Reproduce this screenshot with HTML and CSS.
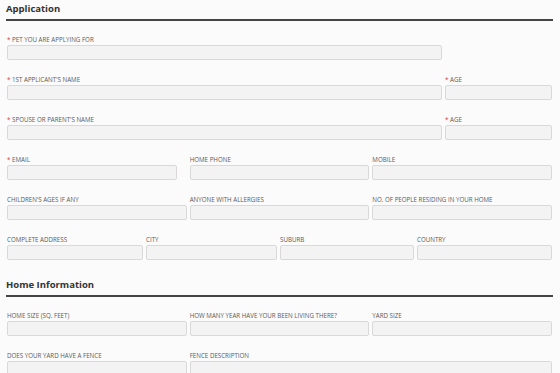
FILE: index.html
```html
<!DOCTYPE html>
<html lang="en">
<head>
    <meta charset="UTF-8">
    <meta name="viewport" content="width=device-width, initial-scale=1.0">
    <title>Adoption Application</title>
    <link rel="stylesheet" href="styles.css">
</head>
<body>
    <form class="application">
        <h2>Application</h2>
        <div class="section">
            <div class="row cols-name">
                <div class="field">
                    <label><span class="req">*</span> Pet you are applying for</label>
                    <input type="text">
                </div>
            </div>
            <div class="row cols-name">
                <div class="field">
                    <label><span class="req">*</span> 1st applicant's name</label>
                    <input type="text">
                </div>
                <div class="field">
                    <label><span class="req">*</span> Age</label>
                    <input type="text">
                </div>
            </div>
            <div class="row cols-name">
                <div class="field">
                    <label><span class="req">*</span> Spouse or parent's name</label>
                    <input type="text">
                </div>
                <div class="field">
                    <label><span class="req">*</span> Age</label>
                    <input type="text">
                </div>
            </div>
            <div class="row cols-3">
                <div class="field">
                    <label><span class="req">*</span> Email</label>
                    <input type="email" class="short">
                </div>
                <div class="field">
                    <label>Home phone</label>
                    <input type="text">
                </div>
                <div class="field">
                    <label>Mobile</label>
                    <input type="text">
                </div>
            </div>
            <div class="row cols-3">
                <div class="field">
                    <label>Children's ages if any</label>
                    <input type="text">
                </div>
                <div class="field">
                    <label>Anyone with allergies</label>
                    <input type="text">
                </div>
                <div class="field">
                    <label>No. of people residing in your home</label>
                    <input type="text">
                </div>
            </div>
            <div class="row cols-4">
                <div class="field">
                    <label>Complete address</label>
                    <input type="text">
                </div>
                <div class="field">
                    <label>City</label>
                    <input type="text">
                </div>
                <div class="field">
                    <label>Suburb</label>
                    <input type="text">
                </div>
                <div class="field">
                    <label>Country</label>
                    <input type="text">
                </div>
            </div>
        </div>

        <h2>Home Information</h2>
        <div class="section">
            <div class="row cols-3">
                <div class="field">
                    <label>Home size (sq. feet)</label>
                    <input type="text">
                </div>
                <div class="field">
                    <label>How many year have your been living there?</label>
                    <input type="text">
                </div>
                <div class="field">
                    <label>Yard size</label>
                    <input type="text">
                </div>
            </div>
            <div class="row cols-3">
                <div class="field">
                    <label>Does your yard have a fence</label>
                    <input type="text">
                </div>
                <div class="field wide">
                    <label>Fence description</label>
                    <input type="text">
                </div>
            </div>
        </div>
    </form>
</body>
</html>
```
FILE: styles.css
```css
body {
    font-family: "Open Sans", Arial, sans-serif;
    background-color: #fbfbfb;
    margin: 0;
    padding: 0;
}
.application {
    width: 547px;
    padding: 0 0 0 6px;
}
h2 {
    margin: 0;
    font-size: 9.5px;
    font-weight: 700;
    line-height: 18px;
    color: #333;
    padding-bottom: 1px;
    border-bottom: 2px solid #444;
}
.section {
    display: flex;
    flex-direction: column;
    gap: 16px;
    padding: 15px 1px 16px 1px;
}
.row {
    display: grid;
    gap: 3px;
}
.cols-name {
    grid-template-columns: 435px 1fr;
}
.cols-3 {
    grid-template-columns: 1fr 1fr 1fr;
}
.cols-4 {
    grid-template-columns: 136px 131px 134px 1fr;
}
.field {
    display: flex;
    flex-direction: column;
}
.field.wide {
    grid-column: span 2;
}
.field label {
    display: block;
    font-size: 6.2px;
    line-height: 8px;
    height: 8px;
    margin-bottom: 1px;
    color: #5a5a5a;
    text-transform: uppercase;
    white-space: nowrap;
}
.req {
    color: #e2363b;
}
.field input {
    box-sizing: border-box;
    width: 100%;
    height: 15px;
    margin: 0;
    padding: 0 4px;
    background-color: #f3f3f3;
    border: 1px solid #d9d9d9;
    border-radius: 2px;
    font-size: 8px;
}
.field input.short {
    width: 170px;
}
```
